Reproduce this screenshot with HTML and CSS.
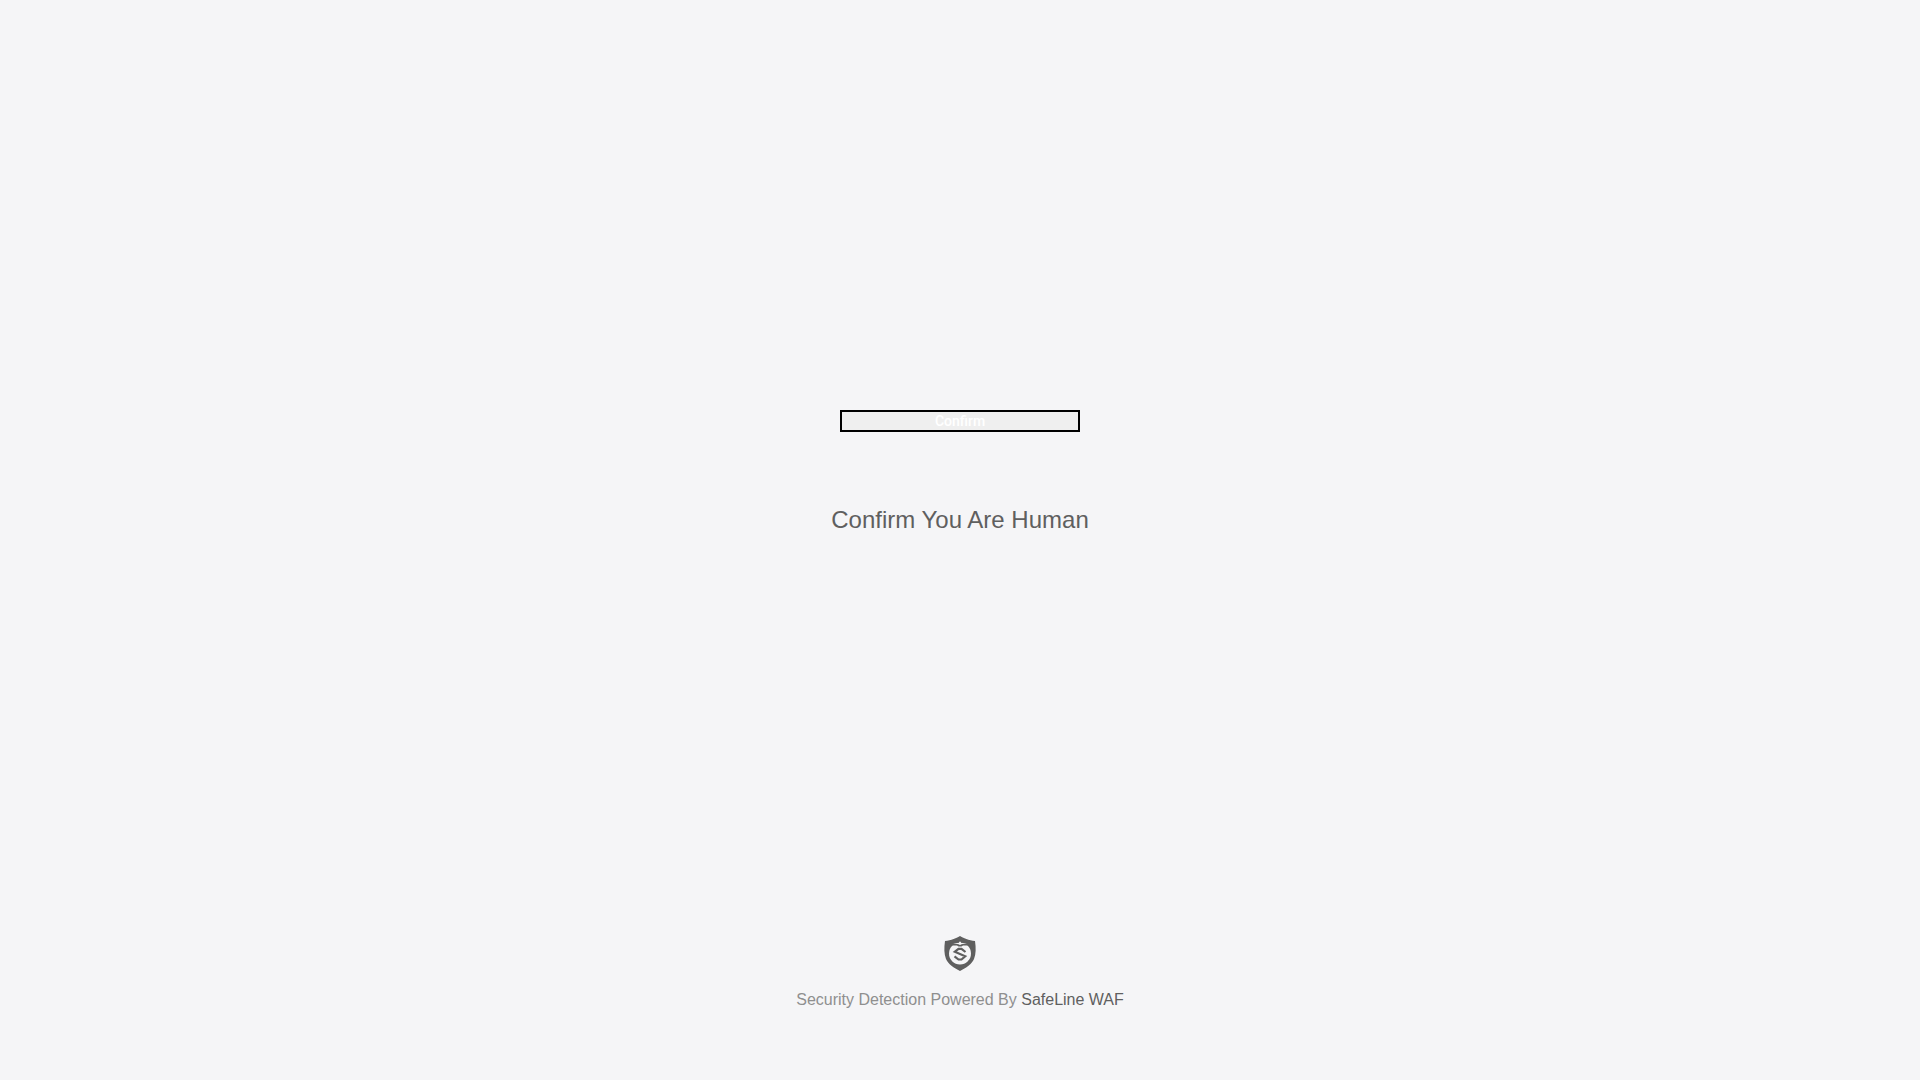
FILE: index.html
```
<!DOCTYPE html>
<html lang="en">
<head>
<meta charset="utf-8">
<meta name="viewport" content="width=device-width, initial-scale=1">
<title>Confirm You Are Human</title>
<link rel="stylesheet" href="styles.css">
</head>
<body>
<main class="challenge">
  <button class="confirm" type="button">Confirm</button>
  <p class="message">Confirm You Are Human</p>
</main>
<footer class="footer">
  <svg class="logo" viewBox="0 0 32 36" aria-hidden="true">
    <path class="shield" d="M16 0C19 2 25 4.500 31 5C32 12 32 18 30 23C28 28 22 32 16 35C10 32 4 28 2 23C0 18 0 12 1 5C7 4.500 13 2 16 0Z"/>
    <circle class="disc" cx="16" cy="17.500" r="11"/>
    <path class="shield" d="M5 6L12 7L16 5L20 7L27 6L25 9.500L19 9.500L17.500 10.500H14.500L13 9.500L7 9.500Z"/>
    <path class="spark" d="M9 7.200L14.500 7L16 5.300L17.500 7L23 7.200L17.500 8.200L16 9L14.500 8.200Z"/>
    <path class="mark" d="M21.500 16L17.500 12.800H14.500L10.800 15.800L21.200 20.300L17.500 23.500H14.500L10.500 20.300"/>
  </svg>
  <p class="credit">Security Detection Powered By <a class="link" href="#">SafeLine WAF</a></p>
</footer>
</body>
</html>
```
FILE: styles.css
```
* { box-sizing: border-box; }
body {
  margin: 0;
  min-height: 100vh;
  display: flex;
  flex-direction: column;
  background: #f5f5f7;
  color: #5f5f5f;
  font-family: "Liberation Sans", Arial, sans-serif;
}
.challenge {
  flex: 1;
  display: flex;
  flex-direction: column;
  align-items: center;
  justify-content: center;
  gap: 72px;
  padding-top: 10px;
}
.confirm {
  width: 240px;
  padding: 1px 6px;
  border: 2px solid #000;
  background: #efefef;
  color: #fff;
  font: 500 14px/16px Roboto, "Liberation Sans", sans-serif;
}
.message { margin: 0; font-size: 24px; line-height: 32px; }
.footer {
  display: flex;
  flex-direction: column;
  align-items: center;
  gap: 16px;
  padding-bottom: 68px;
}
.logo { width: 32px; height: 36px; }
.shield { fill: #5f5f5f; }
.disc, .spark { fill: #f5f5f7; }
.mark { fill: none; stroke: #5f5f5f; stroke-width: 2.2; }
.credit { margin: 0; color: #8f8f8f; font-size: 16px; line-height: 24px; }
.link { color: #5f5f5f; text-decoration: none; }
```
